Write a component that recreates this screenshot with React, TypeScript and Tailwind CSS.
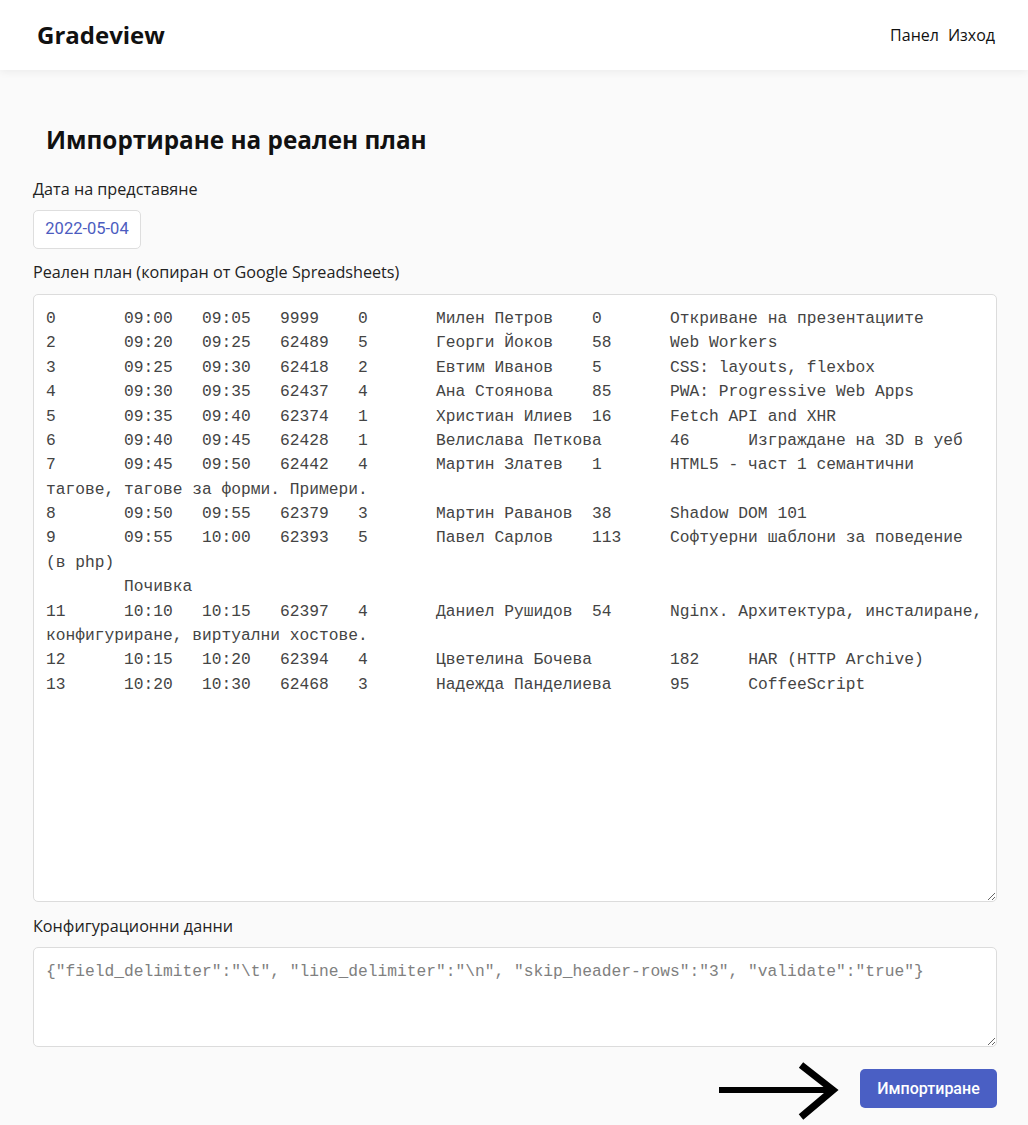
import * as React from "react"

const planText = [
  "0\t09:00\t09:05\t9999\t0\tМилен Петров\t0\tОткриване на презентациите",
  "2\t09:20\t09:25\t62489\t5\tГеорги Йоков\t58\tWeb Workers",
  "3\t09:25\t09:30\t62418\t2\tЕвтим Иванов\t5\tCSS: layouts, flexbox",
  "4\t09:30\t09:35\t62437\t4\tАна Стоянова\t85\tPWA: Progressive Web Apps",
  "5\t09:35\t09:40\t62374\t1\tХристиан Илиев\t16\tFetch API and XHR",
  "6\t09:40\t09:45\t62428\t1\tВелислава Петкова\t46\tИзграждане на 3D в уеб",
  "7\t09:45\t09:50\t62442\t4\tМартин Златев\t1\tHTML5 - част 1 семантични тагове, тагове за форми. Примери.",
  "8\t09:50\t09:55\t62379\t3\tМартин Раванов\t38\tShadow DOM 101",
  "9\t09:55\t10:00\t62393\t5\tПавел Сарлов\t113\tСофтуерни шаблони за поведение (в php)",
  "\tПочивка",
  "11\t10:10\t10:15\t62397\t4\tДаниел Рушидов\t54\tNginx. Архитектура, инсталиране, конфигуриране, виртуални хостове.",
  "12\t10:15\t10:20\t62394\t4\tЦветелина Бочева\t182\tHAR (HTTP Archive)",
  "13\t10:20\t10:30\t62468\t3\tНадежда Панделиева\t95\tCoffeeScript",
].join("\n")

const configText =
  '{"field_delimiter":"\\t", "line_delimiter":"\\n", "skip_header-rows":"3", "validate":"true"}'

function Arrow() {
  return (
    <svg width="120" height="58" viewBox="0 0 120 58" className="shrink-0 -mt-[7px]">
      <line x1="0" y1="28" x2="112" y2="28" stroke="#000" strokeWidth="6" />
      <polyline points="82,3 114,28 82,55" fill="none" stroke="#000" strokeWidth="7" />
    </svg>
  )
}

export default function App() {
  return (
    <div className="min-h-screen bg-[#fafafa] font-['Open_Sans',sans-serif] text-[#222]">
      {/* Header */}
      <header className="h-[70px] bg-white shadow-[0_2px_8px_rgba(0,0,0,0.06)] flex items-center justify-between pl-[37px] pr-[33px]">
        <span className="text-[24px] font-bold text-[#111]">Gradeview</span>
        <nav className="flex gap-[9px] text-[16px] text-[#111]">
          <a>Панел</a>
          <a>Изход</a>
        </nav>
      </header>

      <main className="pt-[54px] pl-[33px] pr-[31px] pb-[17px] flex flex-col">
        <h1 className="ml-[13px] text-[24.3px] leading-[32px] font-bold text-[#111]">
          Импортиране на реален план
        </h1>

        <label className="mt-[22px] text-[16.2px] leading-[22px] text-[#222]">Дата на представяне</label>
        <div className="mt-[10px] w-[108px] h-[39px] bg-white border border-[#dedede] rounded-[5px] flex items-center justify-center font-['Roboto',sans-serif] text-[16.5px] text-[#4c5cc0]">
          2022-05-04
        </div>

        <label className="mt-[12px] text-[16.2px] leading-[22px] text-[#222]">
          Реален план (копиран от Google Spreadsheets)
        </label>
        <textarea
          className="mt-[11px] h-[608px] w-full bg-white border border-[#dcdcdc] rounded-[5px] px-[12px] py-[12px] font-['Liberation_Mono',monospace] text-[16.25px] leading-[1.5] text-[#444] whitespace-pre-wrap [tab-size:8] outline-none"
          defaultValue={planText}
        />

        <label className="mt-[13px] text-[16.2px] leading-[22px] text-[#222]">Конфигурационни данни</label>
        <textarea
          className="mt-[10px] h-[100px] w-full bg-white border border-[#dcdcdc] rounded-[5px] px-[12px] py-[12px] font-['Liberation_Mono',monospace] text-[16.25px] leading-[1.5] placeholder:text-[#808080] outline-none"
          placeholder={configText}
        />

        <div className="mt-[22px] flex items-start justify-end gap-[21px]">
          <Arrow />
          <button className="w-[137px] h-[39px] rounded-[5px] bg-[#4a5fc4] text-white font-['Roboto',sans-serif] font-medium text-[16px]">
            Импортиране
          </button>
        </div>
      </main>
    </div>
  )
}
